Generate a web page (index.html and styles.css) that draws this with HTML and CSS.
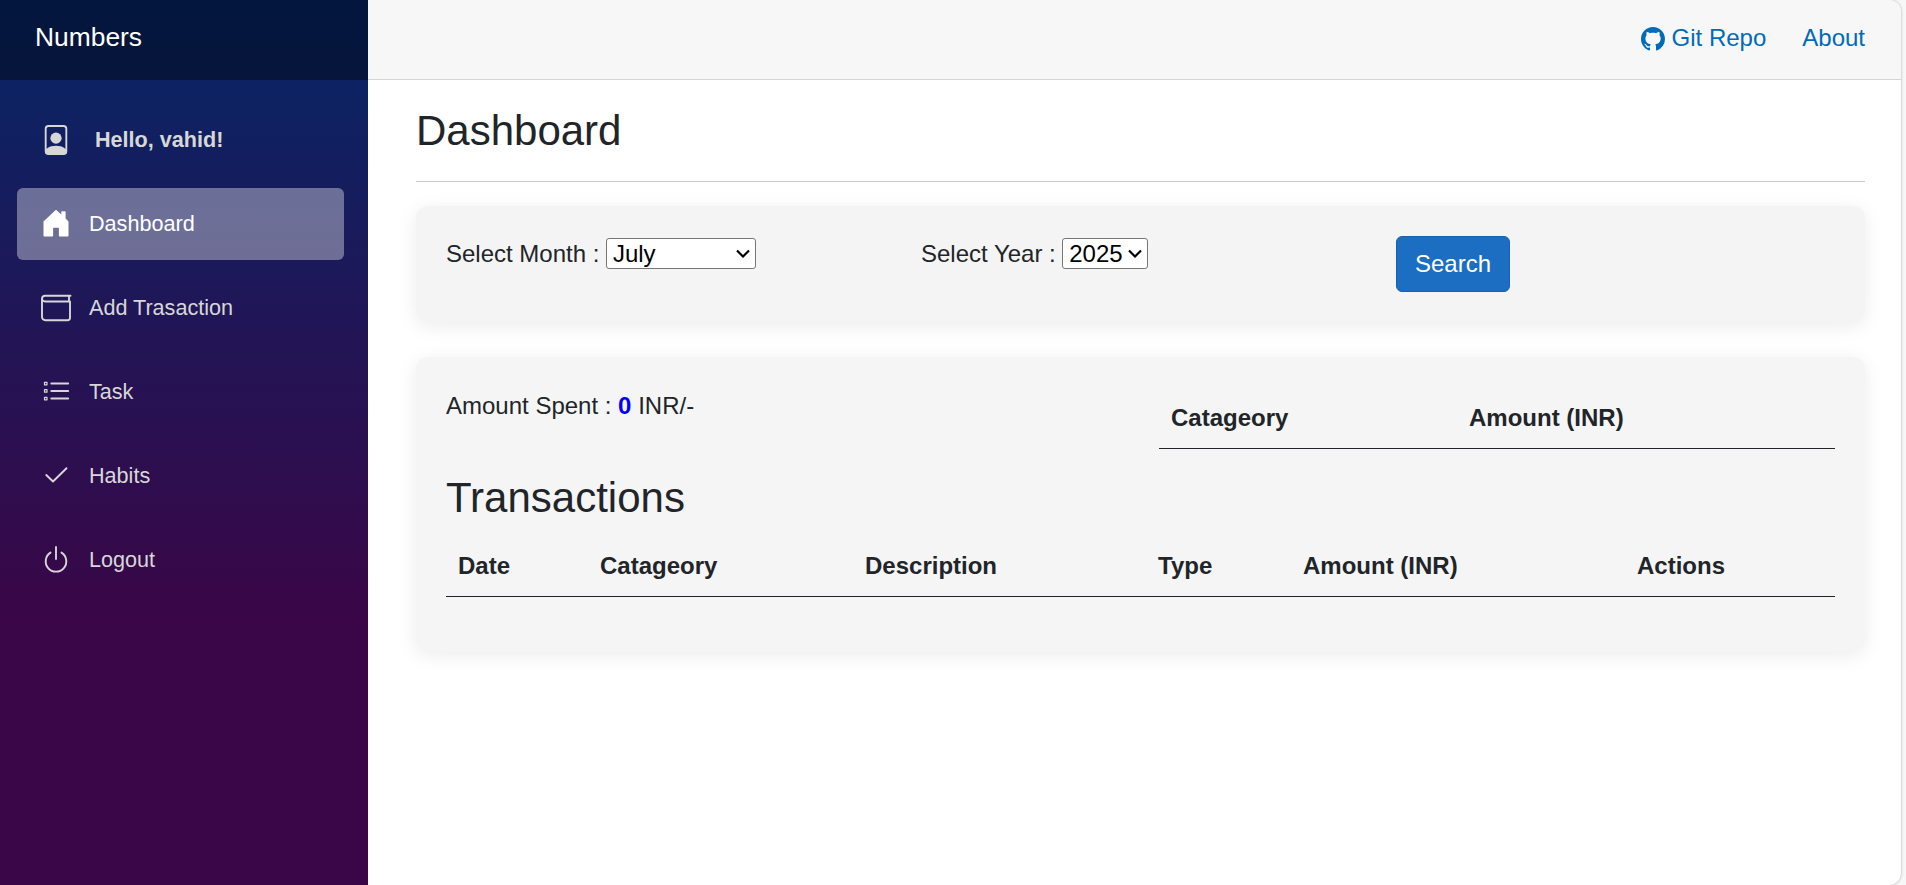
FILE: index.html
```html
<!DOCTYPE html>
<html lang="en">
<head>
<meta charset="utf-8">
<title>Dashboard</title>
<link rel="stylesheet" href="styles.css">
</head>
<body>
<div class="page">
  <aside class="sidebar">
    <div class="brand">Numbers</div>
    <nav class="nav">
      <div class="nav-item greeting">
        <svg class="icon" viewBox="0 0 16 16"><path d="M12 1a1 1 0 0 1 1 1v10.755S12 11 8 11s-5 1.755-5 1.755V2a1 1 0 0 1 1-1h8zM4 0a2 2 0 0 0-2 2v12a2 2 0 0 0 2 2h8a2 2 0 0 0 2-2V2a2 2 0 0 0-2-2H4z"/><path d="M8 10a3 3 0 1 0 0-6 3 3 0 0 0 0 6z"/></svg>
        <b>Hello, vahid!</b>
      </div>
      <a class="nav-item active">
        <svg class="icon" viewBox="0 0 30 30"><path d="M14.400 2.200a.9.900 0 0 1 1.200 0L20.300 6.500V4a.8.800 0 0 1 .8-.8h2.700a.8.800 0 0 1 .8.800v6.600l2.900 2.800V27.700a.8.800 0 0 1-.8.800H18.700a.8.800 0 0 1-.8-.8V20.500a.8.800 0 0 0-.8-.8h-4.200a.8.800 0 0 0-.8.800v7.200a.8.800 0 0 1-.8.800H3.300a.8.800 0 0 1-.8-.8V13.400Z"/></svg>
        <span>Dashboard</span>
      </a>
      <a class="nav-item">
        <svg class="icon line" viewBox="0 0 30 30"><path d="M29.500 3.800H4A3 3 0 0 0 1 6.500V25A3.500 3.500 0 0 0 4.500 28.200H26.500A2.500 2.500 0 0 0 29 25.700V9.500H4A3 3 0 0 1 1 6.500M28 3.800V9.500"/></svg>
        <span>Add Trasaction</span>
      </a>
      <a class="nav-item">
        <svg class="icon line" viewBox="0 0 30 30"><path d="M10.300 7.500H27.200M10.300 15H27.200M10.300 22.500H27.200"/><path class="thin" d="M3.500 6.300h2.500v2.500h-2.500zM3.500 13.700h2.500v2.500h-2.500zM3.500 21.300h2.500v2.500h-2.500z"/></svg>
        <span>Task</span>
      </a>
      <a class="nav-item">
        <svg class="icon line" viewBox="0 0 30 30"><path d="M5.300 15 12 21.500 25.500 8.200"/></svg>
        <span>Habits</span>
      </a>
      <a class="nav-item">
        <svg class="icon line" viewBox="0 0 30 30"><path d="M15 3V15M9.500 8.600A10.300 10.300 0 1 0 20.500 8.600"/></svg>
        <span>Logout</span>
      </a>
    </nav>
  </aside>
  <main class="main">
    <header class="topbar">
      <a class="link"><svg class="github" viewBox="0 0 16 16"><path d="M8 0C3.580 0 0 3.580 0 8c0 3.540 2.290 6.530 5.470 7.590.4.070.55-.17.55-.38 0-.19-.01-.82-.01-1.490-2.010.37-2.530-.49-2.690-.94-.09-.23-.48-.94-.82-1.130-.28-.15-.68-.52-.01-.53.63-.01 1.080.58 1.230.82.72 1.210 1.870.87 2.330.66.07-.52.28-.87.51-1.070-1.780-.2-3.640-.89-3.640-3.950 0-.87.31-1.590.82-2.150-.08-.2-.36-1.020.08-2.120 0 0 .67-.21 2.200.82.64-.18 1.320-.27 2-.27s1.360.09 2 .27c1.530-1.040 2.200-.82 2.200-.82.44 1.100.16 1.920.08 2.120.51.56.82 1.270.82 2.150 0 3.070-1.870 3.750-3.650 3.950.29.25.54.73.54 1.480 0 1.070-.01 1.930-.01 2.200 0 .21.15.46.55.38A8.010 8.010 0 0 0 16 8c0-4.420-3.580-8-8-8z"/></svg>Git Repo</a>
      <a class="link">About</a>
    </header>
    <article class="content">
      <h1>Dashboard</h1>
      <hr>
      <section class="card filters">
        <div class="field"><label for="month">Select Month :</label>
          <span class="picker"><select id="month" class="month"><option>July</option></select><svg class="chevron" viewBox="0 0 14 9"><path d="M1 1.500 7 7.500 13 1.500"/></svg></span></div>
        <div class="field"><label for="year">Select Year :</label>
          <span class="picker"><select id="year" class="year"><option>2025</option></select><svg class="chevron" viewBox="0 0 14 9"><path d="M1 1.500 7 7.500 13 1.500"/></svg></span></div>
        <div><button class="btn">Search</button></div>
      </section>
      <section class="card report">
        <div class="summary">
          <p>Amount Spent : <b class="amount">0</b> INR/-</p>
          <table class="by-category">
            <colgroup><col class="category"><col></colgroup>
            <tr><th>Catageory</th><th>Amount (INR)</th></tr>
          </table>
        </div>
        <h1>Transactions</h1>
        <table class="transactions">
          <colgroup><col class="date"><col class="cat"><col class="desc"><col class="type"><col class="amt"><col></colgroup>
          <tr><th>Date</th><th>Catageory</th><th>Description</th><th>Type</th><th>Amount (INR)</th><th>Actions</th></tr>
        </table>
      </section>
    </article>
  </main>
</div>
</body>
</html>
```
FILE: styles.css
```css
* { box-sizing: border-box; }
body {
  margin: 0;
  background: #f7f7f7;
  color: #212529;
  font: 24px/36px "Liberation Sans", Arial, sans-serif;
}
.page {
  display: flex;
  width: 1901px;
  height: 885px;
  overflow: hidden;
  background: #fff;
  border-radius: 0 12px 12px 0;
  box-shadow: 0 0 3px rgba(0, 0, 0, .3);
}
.sidebar {
  flex: 0 0 368px;
  background: linear-gradient(180deg, #052767 0%, #3a0647 70%);
}
.brand {
  height: 80px;
  padding: 19px 35px;
  background: rgba(0, 0, 0, .4);
  color: #fff;
  font-size: 26.4px;
}
.nav {
  display: flex;
  flex-direction: column;
  gap: 12px;
  padding: 24px 24px 0 17px;
}
.nav-item {
  display: flex;
  align-items: center;
  gap: 18px;
  height: 72px;
  padding: 0 0 2px 24px;
  border-radius: 6px;
  color: #d7d7d7;
  font-size: 21.6px;
}
.nav-item span { padding-top: 1px; }
.greeting { gap: 24px; padding-bottom: 0; }
.active { background: rgba(255, 255, 255, .37); color: #fff; }
.icon { width: 30px; height: 30px; fill: currentColor; }
.line { overflow: visible; fill: none; stroke: currentColor; stroke-width: 1.9; stroke-linecap: round; stroke-linejoin: round; }
.thin { stroke-width: 1.2; }
.main { flex: 1; min-width: 0; }
.topbar {
  display: flex;
  justify-content: flex-end;
  gap: 36px;
  height: 80px;
  padding: 20px 36px 0 0;
  background: #f7f7f7;
  border-bottom: 1px solid #d6d5d5;
}
.link { display: flex; align-items: center; gap: 7px; height: 36px; color: #006bb7; }
.github { width: 24px; height: 24px; margin-top: 2px; fill: currentColor; }
.content { padding: 26px 36px 0 48px; }
h1 { margin: 0; font-size: 42px; line-height: 50px; font-weight: 400; }
hr { height: 1px; margin: 25px 0 24px; border: 0; background: #c8c9ca; }
.card {
  background: #f4f4f4;
  border-radius: 12px;
  box-shadow: 0 4px 20px rgba(0, 0, 0, .08);
}
.filters {
  display: grid;
  grid-template-columns: 475px 475px 1fr;
  height: 116px;
  padding: 30px;
}
.field { display: flex; gap: 6.500px; }
.picker { position: relative; height: 31px; margin-top: 2px; line-height: 31px; }
select {
  appearance: none;
  display: block;
  height: 31px;
  padding: 0 6px;
  border: 1px solid #767676;
  border-radius: 3px;
  background: #fff;
  color: #000;
  font: 24px "Liberation Sans", Arial, sans-serif;
}
.month { width: 150px; }
.year { width: 86px; }
.chevron {
  position: absolute;
  top: 11px;
  right: 6px;
  width: 14px;
  height: 9px;
  fill: none;
  stroke: #000;
  stroke-width: 2.2;
  pointer-events: none;
}
.btn {
  display: block;
  width: 114px;
  height: 56px;
  padding: 0;
  border: 1px solid #1861ac;
  border-radius: 6px;
  background: #1b6ec2;
  color: #fff;
  font: 24px "Liberation Sans", Arial, sans-serif;
}
.report { height: 294px; margin-top: 35px; padding: 30px; background: #f5f5f5; }
.summary { display: grid; grid-template-columns: 713px 1fr; align-items: start; height: 86px; }
.summary p { margin: 1px 0 0; }
.amount { color: #00f; }
table { width: 100%; table-layout: fixed; border-collapse: collapse; }
th { height: 61px; padding: 2px 12px 0; border-bottom: 1px solid #212529; text-align: left; }
.category { width: 298px; }
.transactions { margin-top: 12px; }
.date { width: 142px; }
.cat { width: 265px; }
.desc { width: 293px; }
.type { width: 145px; }
.amt { width: 334px; }
```
